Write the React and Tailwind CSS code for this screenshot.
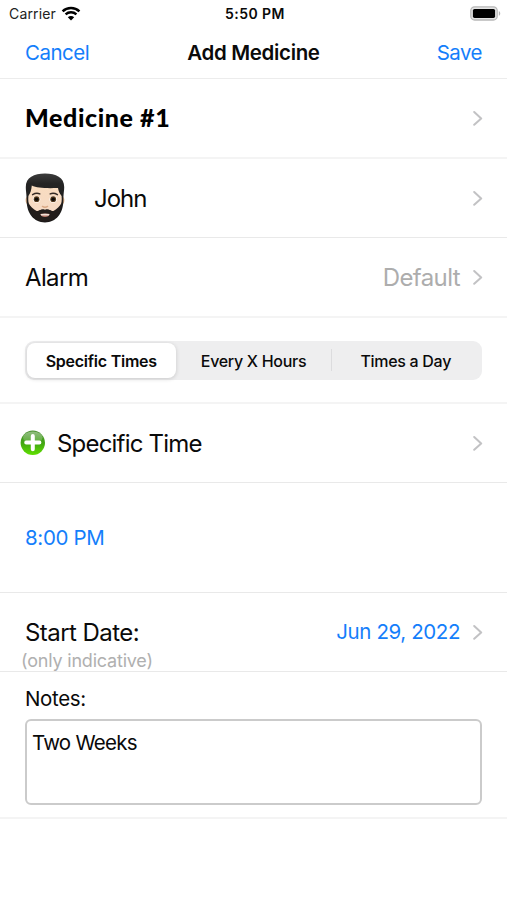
import React, { useState } from 'react';

const Chevron = () => (
  <svg width="10" height="16" viewBox="0 0 10 16" fill="none" className="shrink-0">
    <path d="M1.2 2L8.2 8.4L1.2 14.8" stroke="#c2c2c4" strokeWidth="2" strokeLinecap="round" strokeLinejoin="round" />
  </svg>
);

const WifiIcon = () => (
  <svg width="20" height="15" viewBox="0 0 20 15" fill="none" className="ml-[5px] -mt-px">
    <path d="M1.6 5.3C6.2 0.8 13.8 0.8 18.4 5.3" stroke="#000" strokeWidth="2.5" />
    <path d="M4.6 8.4C7.6 5.6 12.4 5.6 15.4 8.4" stroke="#000" strokeWidth="2.4" />
    <path d="M10 14.4L6.8 11.2C8.6 9.6 11.4 9.6 13.2 11.2Z" fill="#000" />
  </svg>
);

const BatteryIcon = () => (
  <svg width="31" height="15" viewBox="0 0 31 15" fill="none" className="-mt-px">
    <rect x="0.8" y="0.8" width="26.4" height="13.2" rx="3.8" fill="#e4e4e4" stroke="#b8b8b8" strokeWidth="1.3" />
    <rect x="2.9" y="2.9" width="22.2" height="9" rx="1.6" fill="#000" />
    <path d="M28.8 5V9.8C30.7 9 30.7 5.8 28.8 5Z" fill="#b4b4b4" />
  </svg>
);

const Avatar = () => (
  <svg width="40" height="50" viewBox="0 0 40 50">
    <defs>
      <linearGradient id="hair" x1="0" y1="0" x2="0" y2="1">
        <stop offset="0" stopColor="#3c3c3c" />
        <stop offset="0.2" stopColor="#242424" />
        <stop offset="1" stopColor="#1b1918" />
      </linearGradient>
      <linearGradient id="skin" x1="0" y1="0" x2="0" y2="1">
        <stop offset="0" stopColor="#f8dcc0" />
        <stop offset="1" stopColor="#f6dac4" />
      </linearGradient>
    </defs>
    <path d="M2.4 24C0 23.6 -0.2 31 3 31.4ZM37.6 24C40 23.6 40.2 31 37 31.4Z" fill="#e6b78e" />
    <path d="M20 0.6C31 0.6 39.2 4.6 39.2 14C39.2 18 38.4 21 38.4 27C38.4 40.5 31 49.4 20 49.4C9 49.4 1.6 40.5 1.6 27C1.6 21 0.8 18 0.8 14C0.8 4.6 9 0.6 20 0.6Z" fill="url(#hair)" />
    <path d="M6.8 12.6C12 15 20 15.4 33 15C33.6 18 34.4 20.4 36.6 23C37 27 36.6 30.5 35.4 33C33 37.6 30 38.6 26.5 38C24 36.6 22 36.2 20 36.9C18 36.2 16 36.6 13.5 38C10 38.6 7 37.6 4.6 33C3.4 30.5 3 27 3.4 23C5.4 20.4 6.4 17 6.8 12.6Z" fill="url(#skin)" />
    <path d="M3.2 29.4C5.2 33.4 8 36 12 38.2C14.6 37.4 17.4 35.6 20 37C22.6 35.6 25.4 37.4 28 38.2C32 36 34.8 33.4 36.8 29.4C36 42 29 48.6 20 48.6C11 48.6 4 42 3.2 29.4Z" fill="#221d1b" />
    <path d="M7.6 21.6Q11.4 19.4 14.8 20.9M25.2 20.9Q28.6 19.4 32.4 21.6" stroke="#342a25" strokeWidth="1.5" fill="none" strokeLinecap="round" />
    <ellipse cx="11.6" cy="26.4" rx="3.7" ry="3.1" fill="#fff" />
    <ellipse cx="28.2" cy="26.4" rx="3.7" ry="3.1" fill="#fff" />
    <circle cx="11.6" cy="26.2" r="2.9" fill="#54391c" />
    <circle cx="28.2" cy="26.2" r="2.9" fill="#54391c" />
    <circle cx="11.6" cy="26.2" r="1.8" fill="#0c0a08" />
    <circle cx="28.2" cy="26.2" r="1.8" fill="#0c0a08" />
    <path d="M17.4 33.4Q20 35.2 22.6 33.4" stroke="#d9a884" strokeWidth="1.4" fill="none" strokeLinecap="round" />
    <path d="M15.2 41Q20 40 24.8 41Q23.8 44 20 44Q16.2 44 15.2 41Z" fill="#b97668" />
    <path d="M15.6 41.1Q20 40.2 24.4 41.1L23.8 42.5H16.2Z" fill="#eedfd6" />
  </svg>
);

const PlusIcon = () => (
  <svg width="26" height="26" viewBox="0 0 26 26">
    <defs>
      <linearGradient id="plusFill" x1="0" y1="0" x2="0" y2="1">
        <stop offset="0" stopColor="#4a8f30" />
        <stop offset="0.5" stopColor="#41a414" />
        <stop offset="1" stopColor="#5fe000" />
      </linearGradient>
      <linearGradient id="plusShine" x1="0" y1="0" x2="0" y2="1">
        <stop offset="0" stopColor="#fff" stopOpacity="0.4" />
        <stop offset="1" stopColor="#fff" stopOpacity="0.12" />
      </linearGradient>
    </defs>
    <circle cx="12.8" cy="12.8" r="12.2" fill="url(#plusFill)" />
    <ellipse cx="12.8" cy="7.4" rx="9.8" ry="6" fill="url(#plusShine)" />
    <path d="M12.8 6V19.2M6.2 12.6H19.4" stroke="#fff" strokeWidth="4" strokeLinecap="round" />
  </svg>
);

const Segments = ({ items, active, onChange }) => (
  <div className="flex items-center h-[39px] w-full rounded-[9px] bg-[#eeeeef] p-0.5">
    {items.map((item, i) => (
      <React.Fragment key={item}>
        {i > 0 && (
          <span className={`w-px h-[22px] ${i === active + 1 || i === active ? 'bg-transparent' : 'bg-[#dcdcde]'}`} />
        )}
        <button
          onClick={() => onChange(i)}
          className={`h-[35px] rounded-lg text-[16px] pt-0.5 whitespace-nowrap ${i === 1 ? 'w-[154px]' : 'flex-1'} ${
            i === active
              ? 'bg-white font-semibold tracking-[-0.25px] shadow-[0_1px_4px_rgba(0,0,0,0.16)]'
              : 'font-medium tracking-[-0.3px]'
          }`}
        >
          {item}
        </button>
      </React.Fragment>
    ))}
  </div>
);

const App = () => {
  const [mode, setMode] = useState(0);
  const [notes, setNotes] = useState('Two Weeks');

  return (
    <div className="w-full min-h-screen bg-white text-[#0a0a0a] font-['Inter',sans-serif]">
      {/* Status bar */}
      <div className="grid grid-cols-3 items-center h-[27px] pl-[9px] pr-[6px] text-[14px]">
        <div className="flex items-center text-[#222]">
          <span className="tracking-[0.15px]">Carrier</span>
          <WifiIcon />
        </div>
        <span className="text-center font-semibold text-[14px] tracking-[0.45px] whitespace-nowrap">5:50 PM</span>
        <div className="flex justify-end"><BatteryIcon /></div>
      </div>

      {/* Navigation bar */}
      <header className="grid grid-cols-3 items-center h-[52px] px-[25px] pt-px text-[20.5px] border-b border-[#ececec]">
        <button className="text-left text-[#147efb] tracking-[-0.5px]">Cancel</button>
        <h1 className="text-center font-semibold text-[20.5px] tracking-[-0.35px] whitespace-nowrap">Add Medicine</h1>
        <button className="text-right text-[#147efb] tracking-[-0.55px]">Save</button>
      </header>

      <div className="flex items-center justify-between h-20 pl-[25px] pr-6 border-b-2 border-[#f4f4f4]">
        <span className="font-['Lato',sans-serif] font-black text-[25px] tracking-[0.6px] text-black">Medicine #1</span>
        <Chevron />
      </div>

      <div className="flex items-center h-[79px] pl-[25px] pr-6 border-b border-[#e9e9e9]">
        <Avatar />
        <span className="ml-[29px] pt-0.5 flex-1 text-[24px] tracking-[-1px]">John</span>
        <Chevron />
      </div>

      <div className="flex items-center h-20 pl-[25px] pr-6 text-[24px] border-b-2 border-[#f4f4f4]">
        <span className="flex-1 pt-0.5 tracking-[-0.65px]">Alarm</span>
        <span className="mr-[13px] pt-0.5 tracking-[-0.6px] text-[#adadad]">Default</span>
        <Chevron />
      </div>

      <div className="flex items-center h-[86px] px-[25px] border-b-2 border-[#f4f4f4]">
        <Segments items={['Specific Times', 'Every X Hours', 'Times a Day']} active={mode} onChange={setMode} />
      </div>

      <div className="flex items-center h-[79px] pl-5 pr-6 border-b border-[#e9e9e9]">
        <PlusIcon />
        <span className="ml-[11px] pt-px flex-1 text-[24px] tracking-[-0.8px]">Specific Time</span>
        <Chevron />
      </div>

      <div className="flex items-center h-[110px] px-[25px] pt-0.5 border-b border-[#e9e9e9]">
        <span className="text-[20.5px] tracking-[-0.35px] text-[#147efb]">8:00 PM</span>
      </div>

      <div className="h-[79px] pl-[21px] pr-6 pt-[23px] border-b border-[#e9e9e9]">
        <div className="flex items-center h-8 pl-1">
          <span className="flex-1 pt-0.5 text-[24px] tracking-[-0.55px]">Start Date:</span>
          <span className="mr-[13px] pt-px text-[20.5px] tracking-[-0.4px] text-[#147efb]">Jun 29, 2022</span>
          <Chevron />
        </div>
        <p className="pt-px text-[18px] leading-6 tracking-[-0.2px] text-[#b0b0b0]">(only indicative)</p>
      </div>

      <div className="h-[147px] px-[25px] pt-3 border-b-2 border-[#f4f4f4]">
        <label htmlFor="notes" className="block pt-px text-[20.5px] leading-7 tracking-[-0.35px]">Notes:</label>
        <textarea
          id="notes"
          value={notes}
          onChange={(e) => setNotes(e.target.value)}
          className="block mt-1.5 w-full h-[86px] resize-none outline-none rounded-md border-2 border-[#cbcbcb] px-[5px] pt-2 text-[20.5px] leading-7 tracking-[-0.75px]"
        />
      </div>
    </div>
  );
};

export default App;
